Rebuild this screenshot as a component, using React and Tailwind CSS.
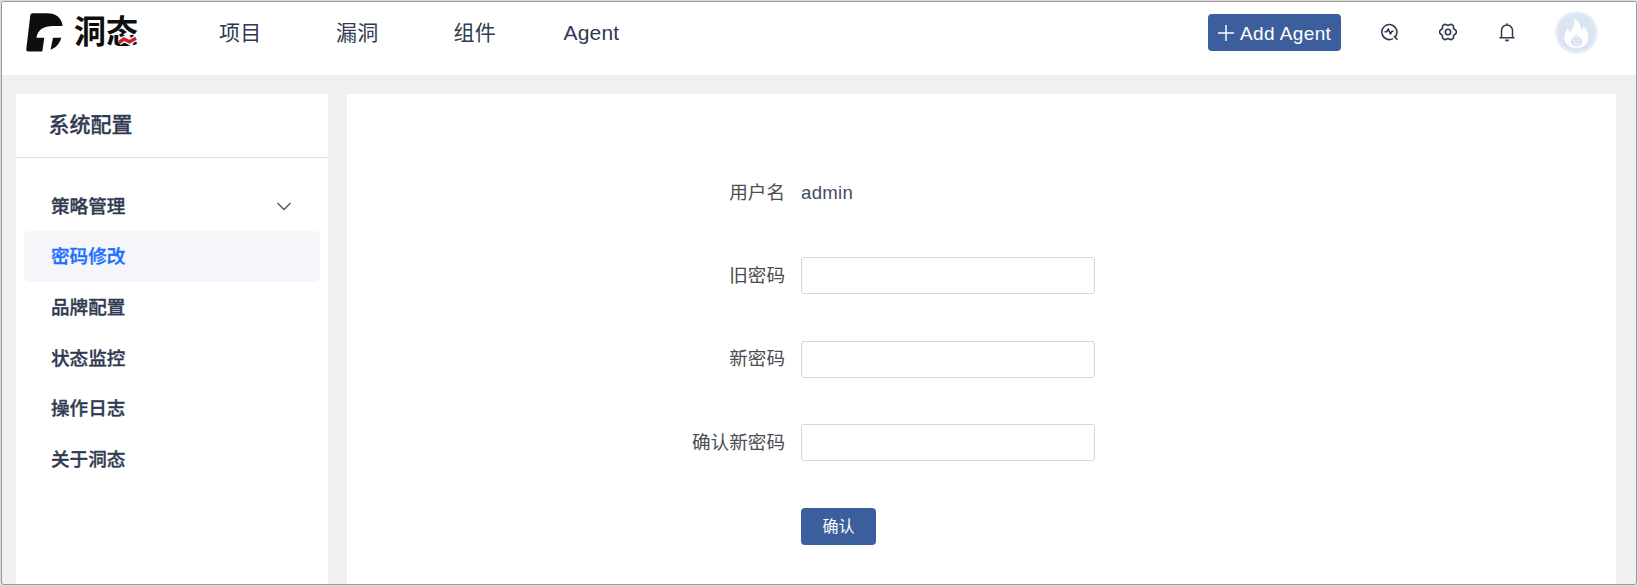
import React from "react";

const NAV = [
  { label: "项目", width: "w-[117px]" },
  { label: "漏洞", width: "w-[117.500px]" },
  { label: "组件", width: "w-[110px]" },
  { label: "Agent", width: "w-[60px]" },
];

const MENU = ["策略管理", "密码修改", "品牌配置", "状态监控", "操作日志", "关于洞态"];

const FIELDS = ["旧密码", "新密码", "确认新密码"];

function Logo() {
  return (
    <div className="flex h-[42px] w-[193px] items-start">
      <svg className="mt-[2px] h-[40px] w-[38px] shrink-0" viewBox="0 0 38 40">
        <path
          d="M6.500 .3H21C30.500 .3 35.500 5 36.600 13H27.500C17 13 11.500 17 10.500 24.800H18.300L16.300 38.500H2.500Q0 38.500 .3 36L4.300 2.200Q4.500 .3 6.500 .3ZM27 24.800H35.300C33.500 31 30.500 34 24.500 37Z"
          fill="#0d0f0e"
        />
      </svg>
      <div className="relative ml-[10px] flex h-[40px] w-[68px] text-[32px] leading-[43px] font-bold text-[#0d0f0e]">
        洞态
        <svg className="absolute top-[25px] left-[44px] h-[9px] w-[19px]" viewBox="0 0 19 9">
          <path d="M1 6.500L6 3L11.500 5.800L18 2.200" fill="none" stroke="#fff" strokeWidth="6" />
          <path d="M1 6.500L6 3L11.500 5.800L18 2.200" fill="none" stroke="#cf1f2c" strokeWidth="3.400" />
        </svg>
      </div>
    </div>
  );
}

function ScanIcon() {
  return (
    <svg className="h-[18px] w-[18px]" viewBox="0 0 18 18" fill="none" stroke="#2f3a52" strokeWidth="1.600">
      <path d="M12 15.600A7.500 7.500 0 1 1 14.600 13.200L13.400 13.600L16.500 16.800" strokeLinejoin="round" />
      <path d="M3.500 8.700H5.600L7.300 6L9.400 11L11 8.200H12.600" strokeLinejoin="round" />
    </svg>
  );
}

function GearIcon() {
  return (
    <svg className="h-[18px] w-[18px]" viewBox="0 0 18 18" fill="none" stroke="#2f3a52" strokeWidth="1.600" strokeLinejoin="round">
      <path d="M17.200 7.700V10.300L14.700 12.300L14.300 15.400L12 16.800L9 15.500L6 16.800L3.700 15.400L3.300 12.300L.8 10.300V7.700L3.300 5.700L3.700 2.600L6 1.200L9 2.500L12 1.200L14.300 2.600L14.700 5.700Z" />
      <circle cx="9" cy="9" r="2.700" />
    </svg>
  );
}

function BellIcon() {
  return (
    <svg className="h-[19px] w-[16px]" viewBox="0 0 16 19" fill="none" stroke="#2f3a52" strokeWidth="1.500">
      <path d="M0.400 14.800H15.600M2.500 14.800V7.500A5.500 5.500 0 0 1 13.500 7.500V14.800M8 .2V2" />
      <path d="M6.200 17.400H9.800" strokeWidth="1.800" />
    </svg>
  );
}

function Avatar() {
  return (
    <svg className="h-[43px] w-[43px]" viewBox="0 0 44 44">
      <circle cx="22" cy="22" r="21.600" fill="#dae4f3" />
      <circle cx="22" cy="22" r="20.200" fill="none" stroke="#fff" strokeWidth=".7" />
      <path
        d="M19.500 7.500C27 12 26 18 27.500 20C29 18 29 16.500 28.600 15C33 19 34.500 23 34 28C33.500 34 28.500 38 22 38C15 38 10 34 9.600 28C9.500 23 11.500 20 13.200 17.500C13.500 20 14.200 21 15.500 22C18 18 21.500 14 19.500 7.500Z"
        fill="#fff"
      />
      <path d="M21.500 23.500C23 26 28 27.500 28 31C28 34.500 25.500 36.200 22 36.200C18.500 36.200 15.800 34 16 30.500C16.200 27 20.800 26.500 21.500 23.500Z" fill="#dae4f3" />
      <path d="M18.500 29.500L20.500 30.500M25.500 29.500L23.500 30.500M19.500 33Q22 34.500 24.500 33M22 26V28" stroke="#fff" strokeWidth=".8" fill="none" />
    </svg>
  );
}

function Header() {
  return (
    <header className="flex h-[73px] shrink-0 items-start bg-white pl-[24px]">
      <div className="mt-[9px]">
        <Logo />
      </div>
      <nav className="flex flex-1 text-[21px] leading-[30px] text-[#2f3a52]">
        {NAV.map((item) => (
          <a key={item.label} className={`mt-[16px] tracking-[0.200px] ${item.width}`}>
            {item.label}
          </a>
        ))}
      </nav>
      <button className="mt-[12px] flex h-[37px] w-[133px] items-center rounded-[4px] bg-[#3d5e9d] pt-[2px] pl-[10px] text-[19px] tracking-[0.400px] whitespace-nowrap text-white">
        <svg className="-mt-[2px] mr-[6px] h-[16px] w-[16px] shrink-0" viewBox="0 0 16 16" stroke="#fff" strokeWidth="1.500">
          <path d="M8 0V16M0 8H16" />
        </svg>
        <span className="pt-px">Add Agent</span>
      </button>
      <div className="mt-[21px] ml-[40px] flex w-[255px] shrink-0 items-start">
        <div className="w-[58px]"><ScanIcon /></div>
        <div className="w-[60px]"><GearIcon /></div>
        <div className="w-[56px]"><BellIcon /></div>
        <div className="-mt-[12px]"><Avatar /></div>
      </div>
    </header>
  );
}

function Sidebar() {
  return (
    <aside className="w-[312px] shrink-0 bg-white font-medium text-[#2f3a52] [-webkit-text-stroke:0.300px_currentColor]">
      <h1 className="h-[64px] border-b border-[#dfe0e2] pl-[32.500px] text-[21px] leading-[61px]">系统配置</h1>
      <ul className="px-[8px] pt-[22.400px] text-[18.600px]">
        {MENU.map((label, i) => (
          <li
            key={label}
            className={`flex h-[50.600px] items-center justify-between rounded-[5px] pt-[2px] pr-[29px] pl-[27px] ${
              i === 1 ? "bg-[#f4f6fa] text-[#1a6dff]" : ""
            }`}
          >
            {label}
            {i === 0 && (
              <svg className="h-[9px] w-[14px]" viewBox="0 0 14 9" fill="none" stroke="#4b5568" strokeWidth="1.300">
                <path d="M.5 1L7 7.500L13.500 1" />
              </svg>
            )}
          </li>
        ))}
      </ul>
    </aside>
  );
}

function PasswordForm() {
  return (
    <main className="flex-1 bg-white pt-[79.500px]">
      <form className="flex flex-col gap-[46.600px] text-[18.600px] text-[#4b4d52]">
        <div className="flex h-[37px] items-center pt-[2px]">
          <span className="w-[454px] pr-[16px] text-right">用户名</span>
          <span className="tracking-[0.300px] text-[#414c66]">admin</span>
        </div>
        {FIELDS.map((label) => (
          <div key={label} className="flex h-[37px] items-center">
            <label className="w-[454px] pr-[16px] text-right">{label}</label>
            <input type="password" className="h-[37px] w-[294px] rounded-[3px] border border-[#d3d5df] bg-white" />
          </div>
        ))}
        <button type="button" className="ml-[454px] h-[37px] w-[75px] rounded-[4px] bg-[#3d5e9d] pt-[2px] text-[16px] text-white">
          确认
        </button>
      </form>
    </main>
  );
}

export default function App() {
  return (
    <div className="h-[586px] w-[1638px] overflow-hidden bg-[#dcdcdc] p-px font-['Liberation_Sans','Noto_Sans_CJK_SC',sans-serif]">
      <div className="flex h-[584px] w-[1636px] flex-col overflow-hidden rounded-[3px] border border-[#999] bg-[#f0f0f0]">
        <Header />
        <div className="flex flex-1 gap-[19px] pt-[19px] pr-[20px] pl-[14px]">
          <Sidebar />
          <PasswordForm />
        </div>
      </div>
    </div>
  );
}
